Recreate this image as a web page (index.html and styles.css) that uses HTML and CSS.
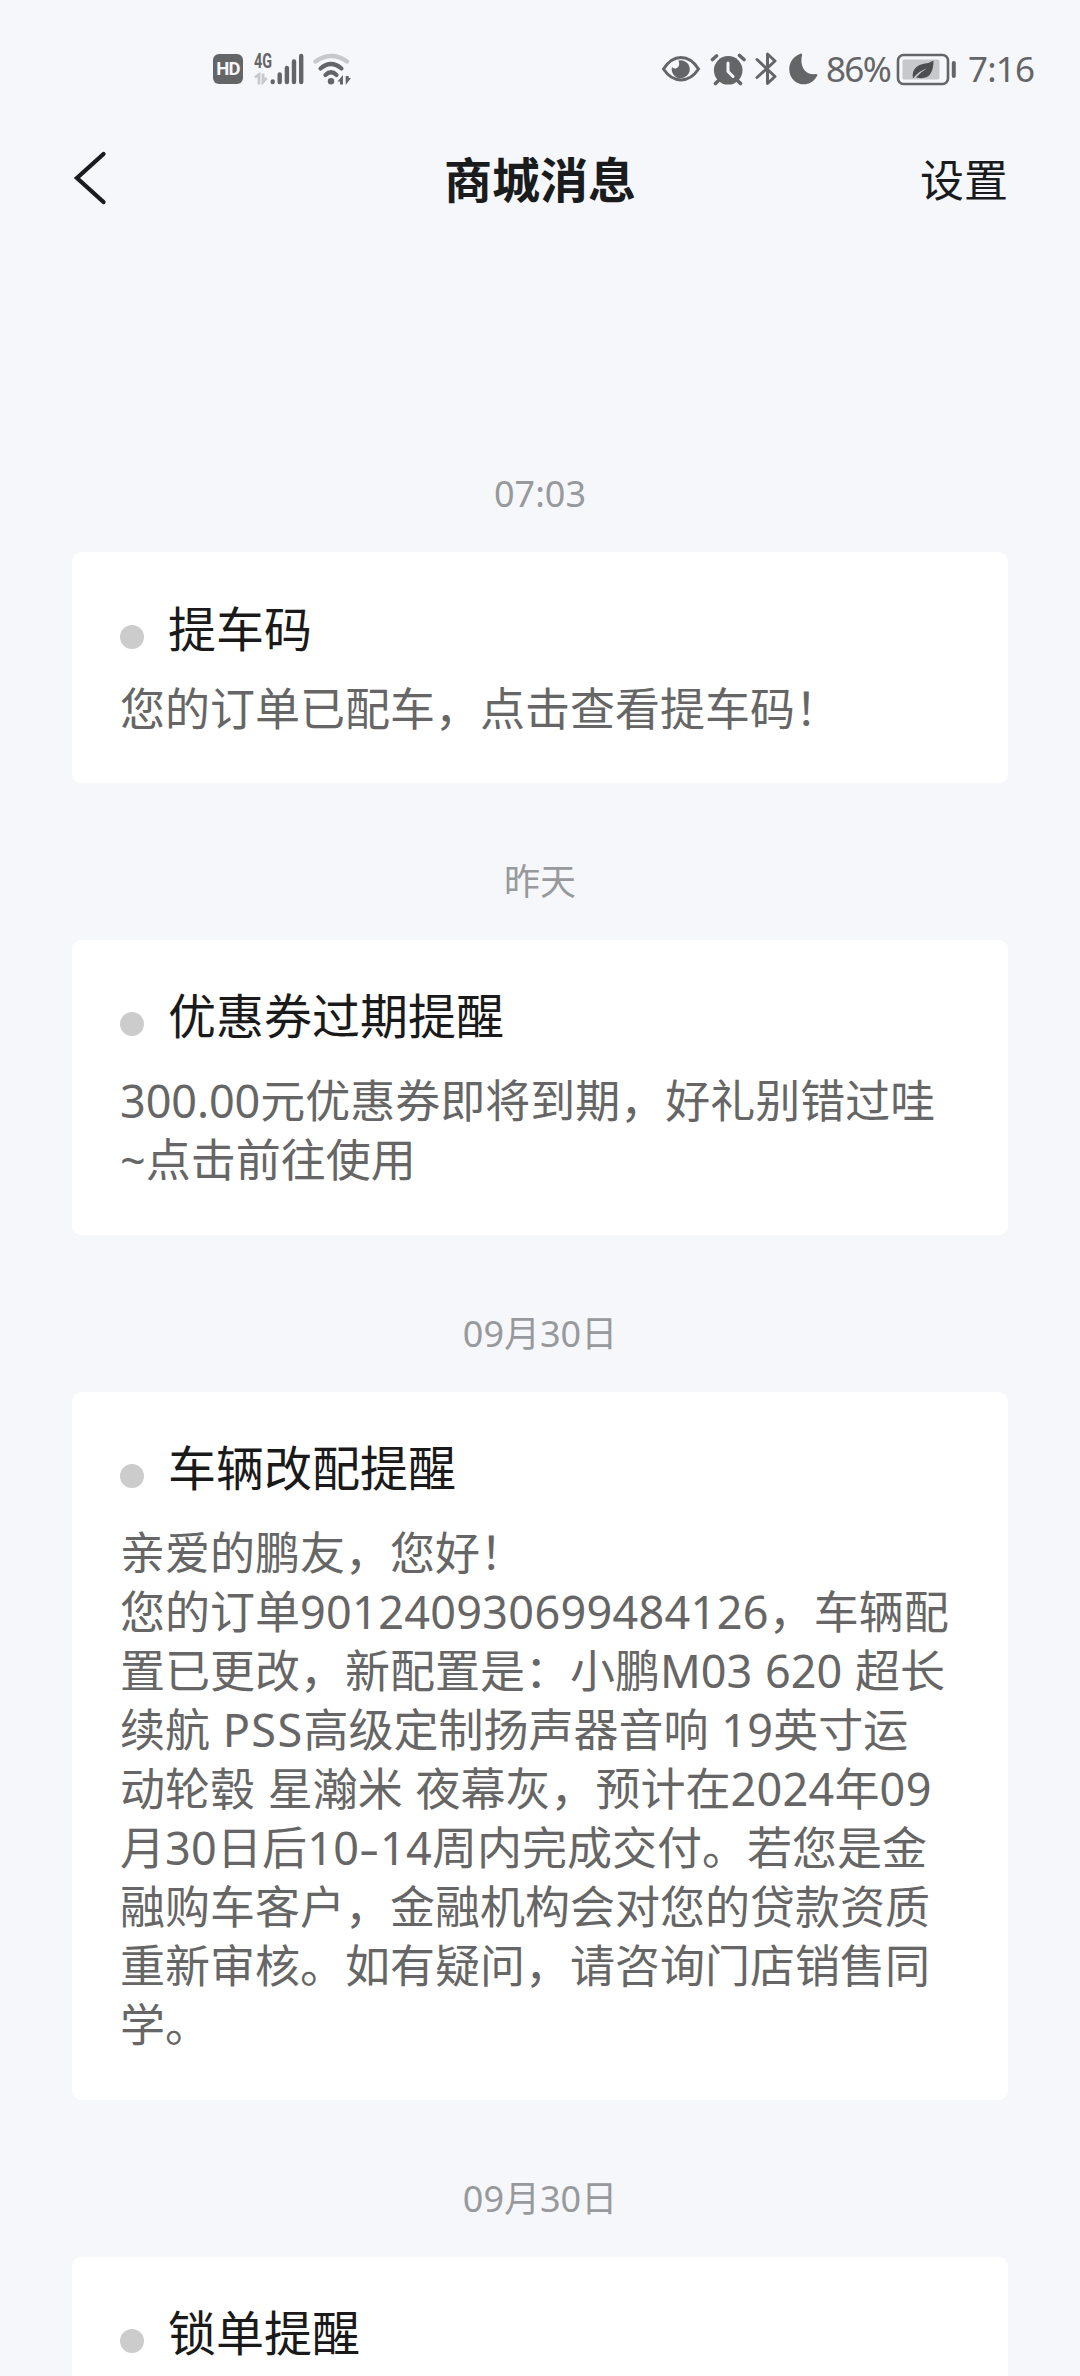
FILE: index.html
```html
<!DOCTYPE html>
<html lang="zh-CN">
<head>
<meta charset="utf-8">
<title>商城消息</title>
<link rel="stylesheet" href="styles.css">
</head>
<body>
<div class="screen">
  <div class="status-bar">
    <div class="status-group">
      <span class="hd-badge">HD</span>
      <div class="network">
        <span class="network-type">4G</span>
        <svg class="network-icon" width="52" height="34" viewBox="252 51 52 34">
          <path d="M255 76.500l4-3v10M266.500 77l-3.500 4v-8.500" fill="none" stroke="#c7c8cb" stroke-width="2.800"/>
          <g stroke="#646567" stroke-width="4.400" stroke-linecap="round"><path d="M272.700 80.500v.5M279.700 73.500v7.500M286.900 67v14M294 60.500v20.500M301.200 55v26"/></g>
        </svg>
      </div>
      <svg class="wifi-icon" width="40" height="34" viewBox="312 51 40 34">
        <g fill="none" stroke-width="4.200" stroke-linecap="round">
          <path d="M315.500 60.500Q331.500 49.500 347 60.500" stroke="#c7c8cb"/>
          <path d="M320.500 67.500Q331 58.500 341.500 67.500M325.500 74Q331 68.500 336.500 74" stroke="#646567"/>
        </g>
        <circle cx="331" cy="80.300" r="3.200" fill="#646567"/>
        <path d="M337.500 80.500l5.500-6.500v9.500h-3v-3zM351 77h-2.300v-2h-3v9z" fill="#646567"/>
      </svg>
    </div>
    <div class="status-group">
      <svg class="eye-icon" width="40" height="34" viewBox="660 51 40 34">
        <path d="M662.500 68C672 52.500 688 52.500 697.500 68C688 82.500 672 82.500 662.500 68Z" fill="none" stroke="#646567" stroke-width="3"/>
        <path d="M677.500 59.500A9 9 0 1 1 671 66Q673 68.500 676 67Q679.500 65 677.500 59.500Z" fill="#646567"/>
      </svg>
      <svg class="alarm-icon" width="36" height="34" viewBox="709 51 36 34">
        <circle cx="727.200" cy="69.300" r="14.300" fill="#646567"/>
        <path d="M718 79l-3.500 3.500M736 79l3.500 3.500M711.500 58.500l4-3.500M743 58.500l-4.500-4" stroke="#646567" stroke-width="3.600" stroke-linecap="round"/>
        <path d="M727 62v8.500l5 5" fill="none" stroke="#f5f7fb" stroke-width="3" stroke-linecap="round" stroke-linejoin="round"/>
      </svg>
      <svg class="bluetooth-icon" width="24" height="36" viewBox="753 50 24 36">
        <path d="M756 58.500L774 75.500L766.500 82.500V53L774 60L756 76.500" fill="none" stroke="#646567" stroke-width="3" stroke-linecap="round" stroke-linejoin="round"/>
      </svg>
      <svg class="moon-icon" width="30" height="34" viewBox="787 51 30 34">
        <path d="M800 52.500Q801.500 52.500 801 54.500C798.500 65 804 74.500 815 73Q817 73 816 75C811 84.500 800 85.500 793.500 80C785 73 786.500 57 800 52.500Z" fill="#646567"/>
      </svg>
      <span class="battery-level">86%</span>
      <svg class="battery-icon" width="60" height="34" viewBox="895 51 60 34">
        <rect x="897" y="54" width="50" height="29" rx="5.500" fill="none" stroke="#646567" stroke-width="2.600"/>
        <rect x="901.500" y="58.500" width="37" height="20" rx="1.500" fill="#c7c8cb"/>
        <path d="M912 77.500C910.500 69 915 64 924 62.500Q928.500 62 932.500 59.500C932.500 72 928 79.500 915 76.500Q920 70.500 926 67.500Q918 69.500 912 77.500Z" fill="#4c4d4f"/>
        <rect x="950.800" y="60" width="4" height="17" rx="2" fill="#646567"/>
      </svg>
      <span class="clock">7:16</span>
    </div>
  </div>

  <header class="nav-bar">
    <svg class="back-icon" width="36" height="56" viewBox="0 0 36 56"><path d="M31.500 4L5 28L31.500 52" fill="none" stroke="#1a1b1d" stroke-width="4.300" stroke-linecap="round"/></svg>
    <h1 class="nav-title">商城消息</h1>
    <span class="nav-action">设置</span>
  </header>

  <main class="message-list">
    <time class="message-date">07:03</time>
    <article class="message-card message-card-brief">
      <h2 class="message-title">提车码</h2>
      <p class="message-body">您的订单已配车，点击查看提车码！</p>
    </article>

    <time class="message-date">昨天</time>
    <article class="message-card">
      <h2 class="message-title">优惠券过期提醒</h2>
      <p class="message-body"><span class="amount">300.00</span>元优惠券即将到期，好礼别错过哇<br>~点击前往使用</p>
    </article>

    <time class="message-date">09月30日</time>
    <article class="message-card">
      <h2 class="message-title">车辆改配提醒</h2>
      <p class="message-body">亲爱的鹏友，您好！<br>您的订单<span class="num">901240930699484126</span>，车辆配<br>置已更改，新配置是：小鹏<span class="model">M03 620</span> 超长<br>续航 <span class="brand">PSS</span>高级定制扬声器音响 <span class="num">19</span>英寸运<br>动轮毂 星瀚米 夜幕灰，预计在<span class="num">2024</span>年<span class="num">09</span><br>月<span class="num">30</span>日后<span class="num">10<span class="range">-</span>14</span>周内完成交付。若您是金<br>融购车客户，金融机构会对您的贷款资质<br>重新审核。如有疑问，请咨询门店销售同<br>学。</p>
    </article>

    <time class="message-date">09月30日</time>
    <article class="message-card">
      <h2 class="message-title">锁单提醒</h2>
    </article>
  </main>
</div>
</body>
</html>
```

FILE: styles.css
```css
* { box-sizing: border-box; }

body {
  margin: 0;
  background: #f5f7fb;
  color: #1a1b1d;
  font-family: "Noto Sans", "Noto Sans CJK SC", sans-serif;
}

.screen {
  width: 1080px;
  height: 2376px;
  overflow: hidden;
}

.status-bar {
  display: flex;
  justify-content: space-between;
  height: 136px;
  padding: 50px 48px 0 213px;
  color: #646567;
}

.status-group {
  display: flex;
  align-items: center;
  height: 37px;
}

.status-group svg { flex: none; display: block; }

.hd-badge {
  width: 30px;
  height: 30px;
  border-radius: 6px;
  background: #646567;
  color: #f5f7fb;
  font: 700 18.5px/31px "Roboto", sans-serif;
  letter-spacing: -.8px;
  text-align: center;
}

.network {
  position: relative;
  margin-left: 9px;
}

.network-type {
  position: absolute;
  left: 2px;
  top: 0;
  font: 700 20px/18px "Roboto", sans-serif;
  transform: scaleX(.72);
  transform-origin: left;
}

.wifi-icon { margin-left: 8px; }
.alarm-icon { margin-left: 9px; }
.bluetooth-icon { margin-left: 8px; }
.moon-icon { margin-left: 10px; }

.battery-level,
.clock {
  font-size: 35px;
  line-height: 37px;
  white-space: nowrap;
}

.battery-level {
  width: 70px;
  margin-left: 8px;
  letter-spacing: -1.7px;
}

.clock {
  width: 64px;
  margin-left: 12px;
  letter-spacing: -.8px;
}

.nav-bar {
  display: grid;
  grid-template-columns: 1fr auto 1fr;
  align-items: center;
  height: 88px;
  padding: 0 72px;
}

.back-icon { display: block; margin-top: -4px; }

.nav-title {
  margin: 0;
  font-size: 48px;
  line-height: 88px;
  font-weight: 700;
}

.nav-action {
  justify-self: end;
  font-size: 44px;
  line-height: 88px;
}

.message-list {
  padding: 171px 72px 0;
}

.message-date {
  display: block;
  height: 157px;
  padding-top: 74px;
  color: #98999c;
  font-size: 36px;
  line-height: 50px;
  text-align: center;
}

.message-card {
  padding: 48px 40px 46px 48px;
  border-radius: 9px;
  background: #fff;
}

.message-title {
  display: flex;
  align-items: center;
  gap: 24px;
  margin: 0;
  color: #1a1a1a;
  font-size: 48px;
  line-height: 56px;
  font-weight: 400;
}

.message-title::before {
  content: "";
  width: 24px;
  height: 24px;
  margin-top: 16px;
  border-radius: 50%;
  background: #ccc;
}

.message-body {
  margin: 27px 0 0;
  color: #666;
  font-size: 45px;
  line-height: 59px;
  white-space: nowrap;
  word-spacing: 1px;
}

.message-card-brief { padding: 49px 40px 45px 48px; }
.message-card-brief .message-body { margin-top: 22px; }

.num { letter-spacing: .3px; }
.amount { letter-spacing: -.1px; }
.model { letter-spacing: 0; }
.brand { letter-spacing: 1.4px; }

.range {
  display: inline-block;
  margin: 0 3px;
  transform: scaleX(1.4);
}
```
